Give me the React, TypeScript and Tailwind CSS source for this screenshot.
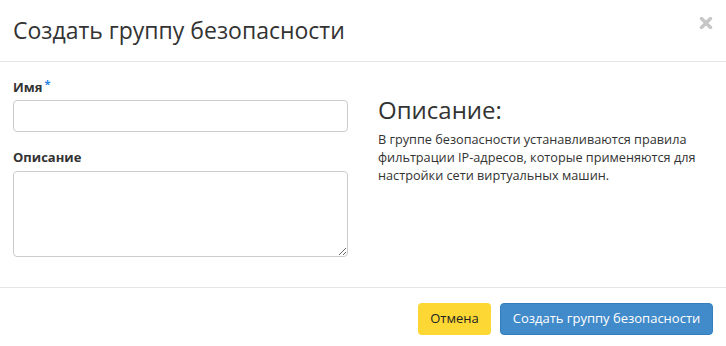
export default function App() {
  return (
    <div className="w-[726px] h-[346px] bg-white text-[#333] font-['Open_Sans',sans-serif]">
      {/* Header */}
      <div className="h-[62px] flex items-center justify-between pl-[13px] pr-[13px] border-b border-[#e5e5e5]">
        <h4 className="text-[23px] leading-none text-[#333] -mt-[1px]">Создать группу безопасности</h4>
        <svg width="14" height="12" viewBox="0 0 14 12" className="-mt-[16px]">
          <path d="M2.5 1.5 L11.5 10.5 M11.5 1.5 L2.5 10.5" stroke="#c6c6c6" strokeWidth="3.4" strokeLinecap="round" />
        </svg>
      </div>

      {/* Body */}
      <div className="h-[225px] flex pl-[13px] pr-[15px] pt-[16px]">
        <div className="w-[335px] flex flex-col">
          <label className="text-[13px] font-bold text-[#333] leading-[18px] mb-[4px]">
            Имя<span className="text-[#1e82e6] align-top text-[11px] ml-[2px] relative -top-[3px]">*</span>
          </label>
          <input className="h-[32px] w-full rounded-[4px] border border-[#ccc] outline-none" />
          <label className="text-[13px] font-bold text-[#333] leading-[18px] mt-[16px] mb-[5px]">Описание</label>
          <textarea className="h-[86px] w-full rounded-[4px] border border-[#ccc] outline-none resize-y" />
        </div>
        <div className="flex-1 pl-[30px] pt-[17px]">
          <h3 className="text-[24px] leading-[30px] text-[#333] mb-[5px]">Описание:</h3>
          <p className="text-[12.7px] leading-[18px] text-[#333]">
            В группе безопасности устанавливаются правила фильтрации IP-адресов, которые применяются для настройки сети виртуальных машин.
          </p>
        </div>
      </div>

      {/* Footer */}
      <div className="border-t border-[#e5e5e5] flex justify-end gap-[9px] pr-[13px] pt-[15px]">
        <button className="h-[32px] w-[73px] rounded-[4px] bg-[#fdd835] text-[13px] text-[#222]">Отмена</button>
        <button className="h-[32px] w-[213px] rounded-[4px] bg-[#428bca] border border-[#357ebd] text-[13px] text-white">Создать группу безопасности</button>
      </div>
    </div>
  );
}
